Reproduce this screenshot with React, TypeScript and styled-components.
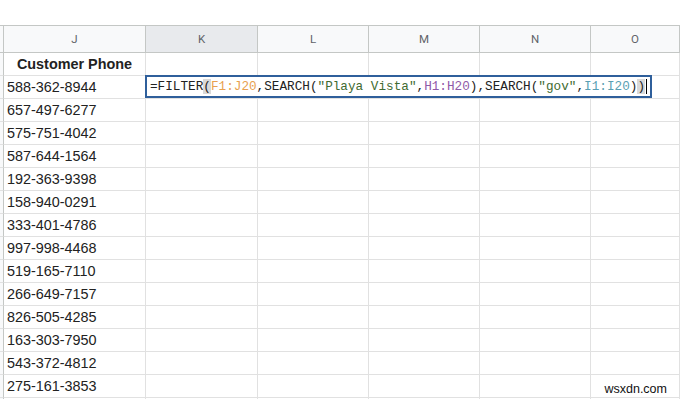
import React from 'react'
import styled, { createGlobalStyle } from 'styled-components'

const GlobalStyle = createGlobalStyle`
  * {
    box-sizing: border-box;
  }

  body {
    margin: 0;
    background: #ffffff;
    font-family: 'Liberation Sans', Arial, sans-serif;
    overflow: hidden;
  }
`

const columns = ['J', 'K', 'L', 'M', 'N', 'O']
const phones = [
  '588-362-8944',
  '657-497-6277',
  '575-751-4042',
  '587-644-1564',
  '192-363-9398',
  '158-940-0291',
  '333-401-4786',
  '997-998-4468',
  '519-165-7110',
  '266-649-7157',
  '826-505-4285',
  '163-303-7950',
  '543-372-4812',
  '275-161-3853',
  '',
]

const Page = styled.div`
  width: 680px;
  height: 399px;
  padding-top: 25px;
  position: relative;
  overflow: hidden;
`

const Grid = styled.div`
  display: grid;
  grid-template-columns: 4px 142px 112px 111px 111px 111px 1fr;
  grid-template-rows: 27px;
  grid-auto-rows: 23px;
  border-top: 1px solid #c4c7c5;
`

const Corner = styled.div<{ $header?: boolean }>`
  background: #f8f9fa;
  border-right: 1px solid #c4c7c5;
  border-bottom: 1px solid ${p => (p.$header ? '#c4c7c5' : '#e1e1e1')};
`

const ColHead = styled.div<{ $active?: boolean }>`
  display: flex;
  align-items: center;
  justify-content: center;
  background: ${p => (p.$active ? '#e8eaed' : '#f8f9fa')};
  border-right: 1px solid #c4c7c5;
  border-bottom: 1px solid #c4c7c5;
  color: #5f6368;
  font-family: 'Roboto', 'Liberation Sans', sans-serif;
  font-size: 11.5px;
`

const Cell = styled.div<{ $bold?: boolean }>`
  position: relative;
  display: flex;
  align-items: center;
  justify-content: ${p => (p.$bold ? 'center' : 'flex-start')};
  padding: 0 3px;
  border-right: 1px solid #e1e1e1;
  border-bottom: 1px solid #e1e1e1;
  font-size: 14.4px;
  font-weight: ${p => (p.$bold ? 700 : 400)};
  color: #222222;
  white-space: nowrap;
`

const Editor = styled.div`
  position: absolute;
  left: -1px;
  top: -1px;
  width: 507px;
  height: 23px;
  display: flex;
  align-items: center;
  padding-left: 3px;
  background: #ffffff;
  border: 2px solid #2f5f9b;
  font-family: 'Liberation Mono', 'DejaVu Sans Mono', monospace;
  font-size: 12.7px;
  color: #222222;
  white-space: pre;
  z-index: 2;
`

const Tok = styled.span<{ $c?: string; $match?: boolean }>`
  color: ${p => p.$c || '#222222'};
  background: ${p => (p.$match ? '#d9d9d9' : 'transparent')};
`

const Caret = styled.span`
  display: inline-block;
  width: 1px;
  height: 15px;
  margin-left: 1px;
  background: #000000;
`

const Watermark = styled.div`
  position: absolute;
  right: 12px;
  bottom: 3px;
  font-size: 12.5px;
  color: #111111;
  background: rgba(255, 255, 255, 0.85);
  padding: 0 1px;
`

const ORANGE = '#e8a14f'
const PURPLE = '#8f5aa8'
const TEAL = '#5a9fb3'
const GREEN = '#3f6b31'

function Formula() {
  return (
    <Editor>
      <Tok>=FILTER</Tok>
      <Tok $match>(</Tok>
      <Tok $c={ORANGE}>F1:J20</Tok>
      <Tok>,SEARCH(</Tok>
      <Tok $c={GREEN}>"Playa Vista"</Tok>
      <Tok>,</Tok>
      <Tok $c={PURPLE}>H1:H20</Tok>
      <Tok>),SEARCH(</Tok>
      <Tok $c={GREEN}>"gov"</Tok>
      <Tok>,</Tok>
      <Tok $c={TEAL}>I1:I20</Tok>
      <Tok>)</Tok>
      <Tok $match>)</Tok>
      <Caret />
    </Editor>
  )
}

export default function App() {
  return (
    <>
      <GlobalStyle />
      <Page>
        <Grid>
          <Corner $header />
          {columns.map(c => (
            <ColHead key={c} $active={c === 'K'}>
              {c}
            </ColHead>
          ))}

          <Corner />
          <Cell $bold>Customer Phone</Cell>
          {columns.slice(1).map(c => (
            <Cell key={c} />
          ))}

          {phones.map((phone, i) => (
            <React.Fragment key={i}>
              <Corner />
              <Cell>{phone}</Cell>
              {columns.slice(1).map(c => (
                <Cell key={c}>{i === 0 && c === 'K' ? <Formula /> : null}</Cell>
              ))}
            </React.Fragment>
          ))}
        </Grid>
        <Watermark>wsxdn.com</Watermark>
      </Page>
    </>
  )
}
